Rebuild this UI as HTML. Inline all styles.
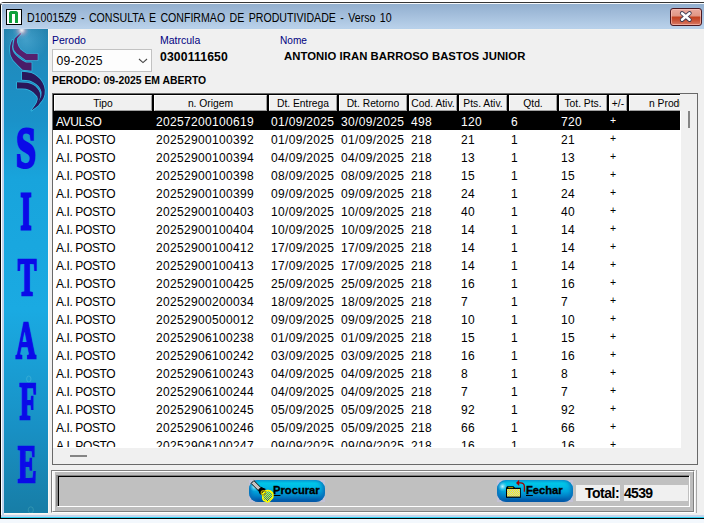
<!DOCTYPE html>
<html><head><meta charset="utf-8">
<style>
*{box-sizing:border-box}
html,body{margin:0;padding:0}
body{width:704px;height:523px;position:relative;overflow:hidden;background:#ffffff;font-family:"Liberation Sans",sans-serif}
.a{position:absolute}
.t{position:absolute;white-space:nowrap;line-height:1}
.hc{background:#f0f0f0;border-top:1px solid #fff;border-left:1px solid #fff;border-right:1px solid #a0a0a0;border-bottom:1px solid #a0a0a0}
.ht{font-size:10.3px;color:#000}
.dt{font-size:12px;letter-spacing:0.32px}
.btn{border-radius:9px;background:linear-gradient(180deg,#0aa8dc 0%,#00c6e8 14%,#00bce6 30%,#00a4dc 52%,#0084c8 72%,#0062b0 88%,#0050a0 100%);box-shadow:inset 4px 0 4px -2px #0a6ab6,inset -4px 0 4px -2px #0a6ab6}
.bt{font-size:11.2px;font-weight:bold;color:#000;-webkit-text-stroke:0.35px #000}
.sl{font-family:"Liberation Serif",serif;font-weight:bold;font-size:53px;color:#0a0ae8;-webkit-text-stroke:2.4px #0a0ae8;text-shadow:0 0 1.2px rgba(80,225,250,0.9),0 1px 0 rgba(80,225,250,0.6);transform:translateX(-50%) scaleX(0.53);transform-origin:50% 0;line-height:0.8}
.dp{font-size:10.5px}
.dl{font-size:12px;letter-spacing:-0.4px}
</style></head><body>
<!-- desktop bottom -->
<div class="a" style="left:0;top:519px;width:704px;height:4px;background:#f3f8fd"></div>
<!-- window frame -->
<div class="a" style="left:0;top:2px;width:710px;height:517px;background:#c0d4ec;border-left:1px solid #000;border-top:1px solid #353535;border-bottom:1px solid #000;border-top-left-radius:4px"></div>
<div class="a" style="left:1px;top:3px;width:710px;height:1px;background:#f6f9fc;border-top-left-radius:3px"></div>
<div class="a" style="left:1px;top:5px;width:1px;height:512px;background:#ffffff"></div>
<!-- title bar -->
<div class="a" style="left:2px;top:4px;width:702px;height:25px;border-top-left-radius:2px;background:linear-gradient(#93b0cf,#9ab6d5 20%,#b9d1ea 96%,#b4d0ea)"></div>
<div class="a" style="left:2px;top:28px;width:46px;height:1px;background:#c4d8ef"></div>
<!-- bottom frame -->
<div class="a" style="left:1px;top:515px;width:703px;height:2px;background:#c4d5ec"></div>
<div class="a" style="left:1px;top:517px;width:703px;height:1px;background:#2ad2f2"></div>
<!-- app icon -->
<div class="a" style="left:6px;top:9px;width:16px;height:16px;border:1px solid #000;background:#fff"></div>
<div class="a" style="left:9px;top:11px;width:9.4px;height:12px;border:3px solid #0ea03a;border-bottom:none;border-radius:3px 3px 0 0"></div>
<!-- title text -->
<div class="t" style="left:27px;top:12px;font-size:12px;color:#000;word-spacing:1.7px;transform:scaleX(0.883);transform-origin:0 0">D10015Z9 - CONSULTA E CONFIRMAO DE PRODUTIVIDADE - Verso 10</div>
<!-- close button -->
<div class="a" style="left:670px;top:8px;width:32px;height:18px;border:1px solid #4a1820;border-radius:3px;background:linear-gradient(#eaaa9e,#e09684 44%,#c2401e 50%,#c85236 70%,#d87a66);box-shadow:inset 0 0 0 1px rgba(255,200,190,0.6)"></div>
<svg class="a" style="left:664px;top:4px" width="40" height="26" viewBox="664 4 40 26">
<path d="M682 13.2 L689.6 19.8 M689.6 13.2 L682 19.8" stroke="#3a3a52" stroke-width="4.2" stroke-linecap="round"/>
<path d="M682 13.2 L689.6 19.8 M689.6 13.2 L682 19.8" stroke="#ffffff" stroke-width="2.5" stroke-linecap="round"/>
</svg>

<!-- content bg -->
<div class="a" style="left:4px;top:29px;width:700px;height:486px;background:#f0f0f0"></div>
<div class="a" style="left:4px;top:29px;width:700px;height:1px;background:#f3f2f0"></div>

<!-- SIDEBAR -->
<svg class="a" style="left:4px;top:29px" width="44" height="484" viewBox="4 29 44 484">
<defs>
<linearGradient id="sg" x1="0" y1="0" x2="0" y2="1">
<stop offset="0" stop-color="#2583ae"/>
<stop offset="0.08" stop-color="#1f8cbf"/>
<stop offset="0.19" stop-color="#1a92c9"/>
<stop offset="0.31" stop-color="#18a4dc"/>
<stop offset="0.58" stop-color="#1aaae2"/>
<stop offset="0.83" stop-color="#1890c4"/>
<stop offset="1" stop-color="#177da6"/>
</linearGradient>
<radialGradient id="glow" cx="21.8" cy="30.2" r="9.5" gradientUnits="userSpaceOnUse">
<stop offset="0" stop-color="#ffffff" stop-opacity="0.9"/>
<stop offset="0.15" stop-color="#fdeaf0" stop-opacity="0.8"/>
<stop offset="0.4" stop-color="#e8b4c8" stop-opacity="0.45"/>
<stop offset="0.7" stop-color="#b8a8d0" stop-opacity="0.15"/>
<stop offset="1" stop-color="#a0c8e0" stop-opacity="0"/>
</radialGradient>
<radialGradient id="glow2" cx="26" cy="40" r="22" gradientUnits="userSpaceOnUse">
<stop offset="0" stop-color="#60b8e0" stop-opacity="0.5"/>
<stop offset="1" stop-color="#60b8e0" stop-opacity="0"/>
</radialGradient>
</defs>
<rect x="4" y="29" width="44" height="484" fill="url(#sg)"/>
<rect x="4" y="29" width="44" height="60" fill="url(#glow2)"/>
<g fill="none" stroke="#38c4ea" stroke-width="1.4" stroke-linejoin="round" opacity="0.85">
<path d="M20.4 32.8 L21.4 33.8 L17.2 38.4 L17 42 L18.3 46 L20.5 49.5 L23.5 51.8 L26.5 53.8 L37.7 53.8 L37.7 60.3 L26 60.3 L21.5 57 L16.5 53.2 L14 50 L13.3 47 L13.6 43.5 L14.6 38.6 Z"/><path d="M12.2 40 L12.9 40.2 L12.5 44 L12 46.5 L12.5 50 L14 53 L16.2 55.5 L18.6 57.8 L22.2 60.4 L26 62.4 L31.6 62.4 L31.6 70.8 L22.5 69.8 L17.7 65 L13 60 L10.5 55 L10 50 L10.2 46 L11 43 Z"/><path d="M22 71.8 L27 72.2 L31.3 73 L34.5 74.5 L37.2 76.4 L40 79 L42.3 82.3 L44 86 L44.8 90 L44.6 94.5 L43.5 98 L42 100.5 L40 103 L38.3 105.4 L35 108 L31.4 110.6 L36.5 104 L39.5 100 L41.3 96 L41.5 92 L40.5 89 L38.9 86.5 L36.8 84.5 L34.7 83 L32 81.5 L29.7 80.6 L26 80 L22 79.8 Z"/><path d="M17 82.3 L22 82.4 L27.1 82.7 L30 83.5 L33 84.8 L35.3 86.3 L37.2 88.2 L38.7 90.2 L39.8 92.4 L40.3 95 L40.2 97 L39.4 100 L37.5 104 L34 108 L31.4 110.6 L34 107 L36.7 102.7 L37.8 99 L37.2 96.5 L35.6 94.7 L33.5 92.5 L31.4 91 L29 89.8 L26 88.8 L22 88.6 L17 88.6 Z"/>
</g>
<path d="M20.4 32.8 L21.4 33.8 L17.2 38.4 L17 42 L18.3 46 L20.5 49.5 L23.5 51.8 L26.5 53.8 L37.7 53.8 L37.7 60.3 L26 60.3 L21.5 57 L16.5 53.2 L14 50 L13.3 47 L13.6 43.5 L14.6 38.6 Z" fill="#55206e"/>
<path d="M12.2 40 L12.9 40.2 L12.5 44 L12 46.5 L12.5 50 L14 53 L16.2 55.5 L18.6 57.8 L22.2 60.4 L26 62.4 L31.6 62.4 L31.6 70.8 L22.5 69.8 L17.7 65 L13 60 L10.5 55 L10 50 L10.2 46 L11 43 Z" fill="#4a1c68"/>
<path d="M22 71.8 L27 72.2 L31.3 73 L34.5 74.5 L37.2 76.4 L40 79 L42.3 82.3 L44 86 L44.8 90 L44.6 94.5 L43.5 98 L42 100.5 L40 103 L38.3 105.4 L35 108 L31.4 110.6 L36.5 104 L39.5 100 L41.3 96 L41.5 92 L40.5 89 L38.9 86.5 L36.8 84.5 L34.7 83 L32 81.5 L29.7 80.6 L26 80 L22 79.8 Z" fill="#2a175a"/>
<path d="M17 82.3 L22 82.4 L27.1 82.7 L30 83.5 L33 84.8 L35.3 86.3 L37.2 88.2 L38.7 90.2 L39.8 92.4 L40.3 95 L40.2 97 L39.4 100 L37.5 104 L34 108 L31.4 110.6 L34 107 L36.7 102.7 L37.8 99 L37.2 96.5 L35.6 94.7 L33.5 92.5 L31.4 91 L29 89.8 L26 88.8 L22 88.6 L17 88.6 Z" fill="#2a175a"/>
<rect x="4" y="29" width="44" height="24" fill="url(#glow)"/>
<ellipse cx="28.8" cy="379" rx="2.2" ry="3" fill="none" stroke="#5cc4dc" stroke-width="0.9" opacity="0.45"/>
<ellipse cx="30.8" cy="510" rx="2.6" ry="3.2" fill="none" stroke="#48a8b8" stroke-width="1" opacity="0.5"/>
</svg>
<div class="t sl" style="left:26px;top:126px;font-size:56px;-webkit-text-stroke:3px #0a0ae8;transform:translateX(-50%) scaleX(0.64)">S</div>
<div class="t sl" style="left:26px;top:190px;-webkit-text-stroke:3px #0a0ae8">I</div>
<div class="t sl" style="left:26.5px;top:256px">T</div>
<div class="t sl" style="left:26px;top:318.5px">A</div>
<div class="t sl" style="left:28px;top:380px">F</div>
<div class="t sl" style="left:26.5px;top:443px">E</div>
<div class="a" style="left:48px;top:29px;width:1px;height:484px;background:#fbf8f4"></div>
<div class="a" style="left:4px;top:513px;width:44px;height:1px;background:#fcf8f4"></div>

<!-- top fields -->
<div class="t" style="left:52px;top:35px;font-size:10.5px;color:#000080">Perodo</div>
<div class="a" style="left:52px;top:49px;width:100px;height:23px;border:1px solid #c2c2c2;background:#fdfdfd"></div>
<div class="t" style="left:56.5px;top:55px;font-size:12.2px;letter-spacing:0.2px;color:#000">09-2025</div>
<svg class="a" style="left:138px;top:58px" width="10" height="6" viewBox="0 0 10 6"><path d="M1 1 L5 4.6 L9 1" fill="none" stroke="#484848" stroke-width="1.1"/></svg>

<div class="t" style="left:160px;top:35px;font-size:10.5px;color:#000080">Matrcula</div>
<div class="t" style="left:160px;top:51px;font-size:12.2px;letter-spacing:0.15px;font-weight:bold;color:#000">0300111650</div>
<div class="t" style="left:280px;top:36px;font-size:10.1px;color:#000080">Nome</div>
<div class="t" style="left:284px;top:51px;font-size:11.3px;letter-spacing:0.06px;font-weight:bold;color:#000">ANTONIO IRAN BARROSO BASTOS JUNIOR</div>
<div class="t" style="left:52px;top:76px;font-size:10.4px;font-weight:bold;color:#000">PERODO: 09-2025 EM ABERTO</div>

<!-- GRID -->
<div class="a" style="left:52px;top:93px;width:646px;height:372px;border:1px solid #696969;background:#f0f0f0"></div>
<div class="a" style="left:53px;top:111px;width:628px;height:337px;background:#fff"></div>
<div class="a" style="left:53px;top:94px;width:627px;height:353px;overflow:hidden">
<div class="a" style="left:0;top:0;width:700px;height:18px;background:#000"></div>
<div class="a hc" style="left:1px;top:1px;width:98px;height:16px"></div>
<div class="t ht" style="left:1px;top:5px;width:98px;text-align:center">Tipo</div>
<div class="a hc" style="left:101px;top:1px;width:113px;height:16px"></div>
<div class="t ht" style="left:101px;top:5px;width:113px;text-align:center">n. Origem</div>
<div class="a hc" style="left:216px;top:1px;width:68px;height:16px"></div>
<div class="t ht" style="left:216px;top:5px;width:68px;text-align:center">Dt. Entrega</div>
<div class="a hc" style="left:286px;top:1px;width:68px;height:16px"></div>
<div class="t ht" style="left:286px;top:5px;width:68px;text-align:center">Dt. Retorno</div>
<div class="a hc" style="left:356px;top:1px;width:48px;height:16px"></div>
<div class="t ht" style="left:356px;top:5px;width:48px;text-align:center">Cod. Ativ.</div>
<div class="a hc" style="left:406px;top:1px;width:48px;height:16px"></div>
<div class="t ht" style="left:406px;top:5px;width:48px;text-align:center">Pts. Ativ.</div>
<div class="a hc" style="left:456px;top:1px;width:48px;height:16px"></div>
<div class="t ht" style="left:456px;top:5px;width:48px;text-align:center">Qtd.</div>
<div class="a hc" style="left:506px;top:1px;width:48px;height:16px"></div>
<div class="t ht" style="left:506px;top:5px;width:48px;text-align:center">Tot. Pts.</div>
<div class="a hc" style="left:556px;top:1px;width:18px;height:16px"></div>
<div class="t ht" style="left:556px;top:5px;width:18px;text-align:center">+/-</div>
<div class="a hc" style="left:576px;top:1px;width:99px;height:16px"></div>
<div class="t ht" style="left:596px;top:5px">n Produtividade</div>
<div class="a" style="left:0;top:17px;width:627px;height:19px;background:#000"></div>
<div class="t dl" style="left:3px;top:22px;color:#fff">AVULSO</div>
<div class="t dt" style="left:103px;top:22px;color:#fff">20257200100619</div>
<div class="t dt" style="left:218px;top:22px;color:#fff">01/09/2025</div>
<div class="t dt" style="left:288px;top:22px;color:#fff">30/09/2025</div>
<div class="t dt" style="left:358px;top:22px;color:#fff">498</div>
<div class="t dt" style="left:408px;top:22px;color:#fff">120</div>
<div class="t dt" style="left:458px;top:22px;color:#fff">6</div>
<div class="t dt" style="left:508px;top:22px;color:#fff">720</div>
<div class="t dp" style="left:557px;top:21px;color:#fff">+</div>
<div class="t dl" style="left:3px;top:40px;color:#000">A.I. POSTO</div>
<div class="t dt" style="left:103px;top:40px;color:#000">20252900100392</div>
<div class="t dt" style="left:218px;top:40px;color:#000">01/09/2025</div>
<div class="t dt" style="left:288px;top:40px;color:#000">01/09/2025</div>
<div class="t dt" style="left:358px;top:40px;color:#000">218</div>
<div class="t dt" style="left:408px;top:40px;color:#000">21</div>
<div class="t dt" style="left:458px;top:40px;color:#000">1</div>
<div class="t dt" style="left:508px;top:40px;color:#000">21</div>
<div class="t dp" style="left:557px;top:39px;color:#000">+</div>
<div class="t dl" style="left:3px;top:58px;color:#000">A.I. POSTO</div>
<div class="t dt" style="left:103px;top:58px;color:#000">20252900100394</div>
<div class="t dt" style="left:218px;top:58px;color:#000">04/09/2025</div>
<div class="t dt" style="left:288px;top:58px;color:#000">04/09/2025</div>
<div class="t dt" style="left:358px;top:58px;color:#000">218</div>
<div class="t dt" style="left:408px;top:58px;color:#000">13</div>
<div class="t dt" style="left:458px;top:58px;color:#000">1</div>
<div class="t dt" style="left:508px;top:58px;color:#000">13</div>
<div class="t dp" style="left:557px;top:57px;color:#000">+</div>
<div class="t dl" style="left:3px;top:76px;color:#000">A.I. POSTO</div>
<div class="t dt" style="left:103px;top:76px;color:#000">20252900100398</div>
<div class="t dt" style="left:218px;top:76px;color:#000">08/09/2025</div>
<div class="t dt" style="left:288px;top:76px;color:#000">08/09/2025</div>
<div class="t dt" style="left:358px;top:76px;color:#000">218</div>
<div class="t dt" style="left:408px;top:76px;color:#000">15</div>
<div class="t dt" style="left:458px;top:76px;color:#000">1</div>
<div class="t dt" style="left:508px;top:76px;color:#000">15</div>
<div class="t dp" style="left:557px;top:75px;color:#000">+</div>
<div class="t dl" style="left:3px;top:94px;color:#000">A.I. POSTO</div>
<div class="t dt" style="left:103px;top:94px;color:#000">20252900100399</div>
<div class="t dt" style="left:218px;top:94px;color:#000">09/09/2025</div>
<div class="t dt" style="left:288px;top:94px;color:#000">09/09/2025</div>
<div class="t dt" style="left:358px;top:94px;color:#000">218</div>
<div class="t dt" style="left:408px;top:94px;color:#000">24</div>
<div class="t dt" style="left:458px;top:94px;color:#000">1</div>
<div class="t dt" style="left:508px;top:94px;color:#000">24</div>
<div class="t dp" style="left:557px;top:93px;color:#000">+</div>
<div class="t dl" style="left:3px;top:112px;color:#000">A.I. POSTO</div>
<div class="t dt" style="left:103px;top:112px;color:#000">20252900100403</div>
<div class="t dt" style="left:218px;top:112px;color:#000">10/09/2025</div>
<div class="t dt" style="left:288px;top:112px;color:#000">10/09/2025</div>
<div class="t dt" style="left:358px;top:112px;color:#000">218</div>
<div class="t dt" style="left:408px;top:112px;color:#000">40</div>
<div class="t dt" style="left:458px;top:112px;color:#000">1</div>
<div class="t dt" style="left:508px;top:112px;color:#000">40</div>
<div class="t dp" style="left:557px;top:111px;color:#000">+</div>
<div class="t dl" style="left:3px;top:130px;color:#000">A.I. POSTO</div>
<div class="t dt" style="left:103px;top:130px;color:#000">20252900100404</div>
<div class="t dt" style="left:218px;top:130px;color:#000">10/09/2025</div>
<div class="t dt" style="left:288px;top:130px;color:#000">10/09/2025</div>
<div class="t dt" style="left:358px;top:130px;color:#000">218</div>
<div class="t dt" style="left:408px;top:130px;color:#000">14</div>
<div class="t dt" style="left:458px;top:130px;color:#000">1</div>
<div class="t dt" style="left:508px;top:130px;color:#000">14</div>
<div class="t dp" style="left:557px;top:129px;color:#000">+</div>
<div class="t dl" style="left:3px;top:148px;color:#000">A.I. POSTO</div>
<div class="t dt" style="left:103px;top:148px;color:#000">20252900100412</div>
<div class="t dt" style="left:218px;top:148px;color:#000">17/09/2025</div>
<div class="t dt" style="left:288px;top:148px;color:#000">17/09/2025</div>
<div class="t dt" style="left:358px;top:148px;color:#000">218</div>
<div class="t dt" style="left:408px;top:148px;color:#000">14</div>
<div class="t dt" style="left:458px;top:148px;color:#000">1</div>
<div class="t dt" style="left:508px;top:148px;color:#000">14</div>
<div class="t dp" style="left:557px;top:147px;color:#000">+</div>
<div class="t dl" style="left:3px;top:166px;color:#000">A.I. POSTO</div>
<div class="t dt" style="left:103px;top:166px;color:#000">20252900100413</div>
<div class="t dt" style="left:218px;top:166px;color:#000">17/09/2025</div>
<div class="t dt" style="left:288px;top:166px;color:#000">17/09/2025</div>
<div class="t dt" style="left:358px;top:166px;color:#000">218</div>
<div class="t dt" style="left:408px;top:166px;color:#000">14</div>
<div class="t dt" style="left:458px;top:166px;color:#000">1</div>
<div class="t dt" style="left:508px;top:166px;color:#000">14</div>
<div class="t dp" style="left:557px;top:165px;color:#000">+</div>
<div class="t dl" style="left:3px;top:184px;color:#000">A.I. POSTO</div>
<div class="t dt" style="left:103px;top:184px;color:#000">20252900100425</div>
<div class="t dt" style="left:218px;top:184px;color:#000">25/09/2025</div>
<div class="t dt" style="left:288px;top:184px;color:#000">25/09/2025</div>
<div class="t dt" style="left:358px;top:184px;color:#000">218</div>
<div class="t dt" style="left:408px;top:184px;color:#000">16</div>
<div class="t dt" style="left:458px;top:184px;color:#000">1</div>
<div class="t dt" style="left:508px;top:184px;color:#000">16</div>
<div class="t dp" style="left:557px;top:183px;color:#000">+</div>
<div class="t dl" style="left:3px;top:202px;color:#000">A.I. POSTO</div>
<div class="t dt" style="left:103px;top:202px;color:#000">20252900200034</div>
<div class="t dt" style="left:218px;top:202px;color:#000">18/09/2025</div>
<div class="t dt" style="left:288px;top:202px;color:#000">18/09/2025</div>
<div class="t dt" style="left:358px;top:202px;color:#000">218</div>
<div class="t dt" style="left:408px;top:202px;color:#000">7</div>
<div class="t dt" style="left:458px;top:202px;color:#000">1</div>
<div class="t dt" style="left:508px;top:202px;color:#000">7</div>
<div class="t dp" style="left:557px;top:201px;color:#000">+</div>
<div class="t dl" style="left:3px;top:220px;color:#000">A.I. POSTO</div>
<div class="t dt" style="left:103px;top:220px;color:#000">20252900500012</div>
<div class="t dt" style="left:218px;top:220px;color:#000">09/09/2025</div>
<div class="t dt" style="left:288px;top:220px;color:#000">09/09/2025</div>
<div class="t dt" style="left:358px;top:220px;color:#000">218</div>
<div class="t dt" style="left:408px;top:220px;color:#000">10</div>
<div class="t dt" style="left:458px;top:220px;color:#000">1</div>
<div class="t dt" style="left:508px;top:220px;color:#000">10</div>
<div class="t dp" style="left:557px;top:219px;color:#000">+</div>
<div class="t dl" style="left:3px;top:238px;color:#000">A.I. POSTO</div>
<div class="t dt" style="left:103px;top:238px;color:#000">20252906100238</div>
<div class="t dt" style="left:218px;top:238px;color:#000">01/09/2025</div>
<div class="t dt" style="left:288px;top:238px;color:#000">01/09/2025</div>
<div class="t dt" style="left:358px;top:238px;color:#000">218</div>
<div class="t dt" style="left:408px;top:238px;color:#000">15</div>
<div class="t dt" style="left:458px;top:238px;color:#000">1</div>
<div class="t dt" style="left:508px;top:238px;color:#000">15</div>
<div class="t dp" style="left:557px;top:237px;color:#000">+</div>
<div class="t dl" style="left:3px;top:256px;color:#000">A.I. POSTO</div>
<div class="t dt" style="left:103px;top:256px;color:#000">20252906100242</div>
<div class="t dt" style="left:218px;top:256px;color:#000">03/09/2025</div>
<div class="t dt" style="left:288px;top:256px;color:#000">03/09/2025</div>
<div class="t dt" style="left:358px;top:256px;color:#000">218</div>
<div class="t dt" style="left:408px;top:256px;color:#000">16</div>
<div class="t dt" style="left:458px;top:256px;color:#000">1</div>
<div class="t dt" style="left:508px;top:256px;color:#000">16</div>
<div class="t dp" style="left:557px;top:255px;color:#000">+</div>
<div class="t dl" style="left:3px;top:274px;color:#000">A.I. POSTO</div>
<div class="t dt" style="left:103px;top:274px;color:#000">20252906100243</div>
<div class="t dt" style="left:218px;top:274px;color:#000">04/09/2025</div>
<div class="t dt" style="left:288px;top:274px;color:#000">04/09/2025</div>
<div class="t dt" style="left:358px;top:274px;color:#000">218</div>
<div class="t dt" style="left:408px;top:274px;color:#000">8</div>
<div class="t dt" style="left:458px;top:274px;color:#000">1</div>
<div class="t dt" style="left:508px;top:274px;color:#000">8</div>
<div class="t dp" style="left:557px;top:273px;color:#000">+</div>
<div class="t dl" style="left:3px;top:292px;color:#000">A.I. POSTO</div>
<div class="t dt" style="left:103px;top:292px;color:#000">20252906100244</div>
<div class="t dt" style="left:218px;top:292px;color:#000">04/09/2025</div>
<div class="t dt" style="left:288px;top:292px;color:#000">04/09/2025</div>
<div class="t dt" style="left:358px;top:292px;color:#000">218</div>
<div class="t dt" style="left:408px;top:292px;color:#000">7</div>
<div class="t dt" style="left:458px;top:292px;color:#000">1</div>
<div class="t dt" style="left:508px;top:292px;color:#000">7</div>
<div class="t dp" style="left:557px;top:291px;color:#000">+</div>
<div class="t dl" style="left:3px;top:310px;color:#000">A.I. POSTO</div>
<div class="t dt" style="left:103px;top:310px;color:#000">20252906100245</div>
<div class="t dt" style="left:218px;top:310px;color:#000">05/09/2025</div>
<div class="t dt" style="left:288px;top:310px;color:#000">05/09/2025</div>
<div class="t dt" style="left:358px;top:310px;color:#000">218</div>
<div class="t dt" style="left:408px;top:310px;color:#000">92</div>
<div class="t dt" style="left:458px;top:310px;color:#000">1</div>
<div class="t dt" style="left:508px;top:310px;color:#000">92</div>
<div class="t dp" style="left:557px;top:309px;color:#000">+</div>
<div class="t dl" style="left:3px;top:328px;color:#000">A.I. POSTO</div>
<div class="t dt" style="left:103px;top:328px;color:#000">20252906100246</div>
<div class="t dt" style="left:218px;top:328px;color:#000">05/09/2025</div>
<div class="t dt" style="left:288px;top:328px;color:#000">05/09/2025</div>
<div class="t dt" style="left:358px;top:328px;color:#000">218</div>
<div class="t dt" style="left:408px;top:328px;color:#000">66</div>
<div class="t dt" style="left:458px;top:328px;color:#000">1</div>
<div class="t dt" style="left:508px;top:328px;color:#000">66</div>
<div class="t dp" style="left:557px;top:327px;color:#000">+</div>
<div class="t dl" style="left:3px;top:346px;color:#000">A.I. POSTO</div>
<div class="t dt" style="left:103px;top:346px;color:#000">20252906100247</div>
<div class="t dt" style="left:218px;top:346px;color:#000">09/09/2025</div>
<div class="t dt" style="left:288px;top:346px;color:#000">09/09/2025</div>
<div class="t dt" style="left:358px;top:346px;color:#000">218</div>
<div class="t dt" style="left:408px;top:346px;color:#000">16</div>
<div class="t dt" style="left:458px;top:346px;color:#000">1</div>
<div class="t dt" style="left:508px;top:346px;color:#000">16</div>
<div class="t dp" style="left:557px;top:345px;color:#000">+</div>
</div>
<div class="a" style="left:688px;top:111px;width:2px;height:17px;background:#858585"></div>
<div class="a" style="left:70px;top:455px;width:17px;height:2px;background:#858585"></div>

<!-- BOTTOM PANEL -->
<!-- groove -->
<div class="a" style="left:51px;top:470px;width:644px;height:43px;border-top:1px solid #808080;border-left:1px solid #808080;border-right:1px solid #fff;border-bottom:1px solid #fff"></div>
<div class="a" style="left:52px;top:471px;width:642px;height:41px;border-top:1px solid #fff;border-left:1px solid #fff;border-right:1px solid #808080;border-bottom:1px solid #808080;background:#bdbdbd"></div>
<div class="a" style="left:53px;top:472px;width:2px;height:39px;background:#f4f4f4"></div>
<!-- inner sunken -->
<div class="a" style="left:56px;top:475px;width:634px;height:32px;border-top:1px solid #808080;border-left:2px solid #8c8c8c;border-right:1px solid #fff;border-bottom:1px solid #fff"></div>
<div class="a" style="left:58px;top:476px;width:631px;height:30px;border-top:1px solid #000;border-left:1px solid #000;background:#c0c0c0"></div>
<div class="a" style="left:696px;top:470px;width:1px;height:43px;background:#a8a8a8"></div>
<!-- Procurar button -->
<div class="a" style="left:249px;top:480px;width:76px;height:22px;background:#c4c2d6"></div>
<div class="a btn" style="left:249px;top:480px;width:76px;height:22px"></div>
<div class="t bt" style="left:273px;top:485px"><u>P</u>rocurar</div>
<!-- Fechar button -->
<div class="a" style="left:497px;top:480px;width:76px;height:22px;background:#c4c2d6"></div>
<div class="a btn" style="left:497px;top:480px;width:76px;height:22px"></div>
<div class="t bt" style="left:526px;top:485px"><u>F</u>echar</div>
<div class="a" style="left:250px;top:481px;width:9px;height:11px;border-radius:50%;background:radial-gradient(circle at 50% 50%,rgba(210,250,255,0.9),rgba(120,220,250,0.4) 40%,rgba(0,180,230,0) 70%)"></div>
<div class="a" style="left:498px;top:481px;width:9px;height:11px;border-radius:50%;background:radial-gradient(circle at 50% 50%,rgba(210,250,255,0.9),rgba(120,220,250,0.4) 40%,rgba(0,180,230,0) 70%)"></div>
<svg class="a" style="left:249px;top:479px" width="26" height="24" viewBox="249 479 26 24">
<defs><pattern id="dy" width="2" height="2" patternUnits="userSpaceOnUse"><rect x="0" y="0" width="1" height="1" fill="#ffff00"/><rect x="1" y="1" width="1" height="1" fill="#ffff00"/></pattern></defs>
<path d="M267 490.6 C270 490 273.5 492.5 273 495.5 C273.4 498 271.5 499 270.5 500 C269.5 502 267 502.5 265.5 501 C263.5 500.5 262.5 498.5 262.8 496.5 C261.5 494 263.5 491 267 490.6 Z" fill="url(#dy)" stroke="#ffff00" stroke-width="1.5"/>
<path d="M253.9 480.6 L260.9 487.6 L258.1 490.4 L251.1 483.4 Z" fill="#c8c2c2" stroke="#000" stroke-width="0.9" stroke-linejoin="round"/>
<path d="M258.6 490.2 L261.3 487.5 L265.3 489.3 L260.4 494.2 Z" fill="#000" stroke="#000" stroke-width="1"/>
<circle cx="263.4" cy="492.8" r="2.2" fill="none" stroke="#b0a000" stroke-width="1.2"/>
</svg>
<svg class="a" style="left:503px;top:479px" width="26" height="22" viewBox="503 479 26 22">
<defs><pattern id="dy2" width="2" height="2" patternUnits="userSpaceOnUse"><rect x="0" y="0" width="2" height="2" fill="#ffff00"/><rect x="1" y="0" width="1" height="1" fill="#c0c0d8"/><rect x="0" y="1" width="1" height="1" fill="#c0c0d8"/></pattern></defs>
<path d="M507 486.2 L513.5 486.2 L515 487.8 L520.8 487.8 L520.8 497.8 L506 497.8 L506 488 Z" fill="#000"/>
<rect x="507" y="489" width="13" height="7.6" fill="url(#dy2)"/>
<rect x="508.2" y="487.2" width="5" height="0.9" fill="#b8b000"/>
<path d="M524.4 491.8 L524.4 486.5 C524.4 484.5 523 483 520.5 482.9 L518.5 482.9" fill="none" stroke="#a00000" stroke-width="1.3"/>
<path d="M516 482.9 L519.2 479.8 L519.2 486 Z" fill="#a00000"/>
</svg>
<!-- total -->
<div class="a" style="left:576px;top:485px;width:44px;height:16px;background:#f0f0f0"></div>
<div class="a" style="left:624px;top:485px;width:64px;height:16px;background:#f0f0f0"></div>
<div class="t" style="left:585px;top:486px;font-size:14px;letter-spacing:-0.5px;font-weight:bold;color:#000">Total:</div>
<div class="t" style="left:624px;top:486px;font-size:14px;letter-spacing:-0.7px;font-weight:bold;color:#000">4539</div>

</body></html>
